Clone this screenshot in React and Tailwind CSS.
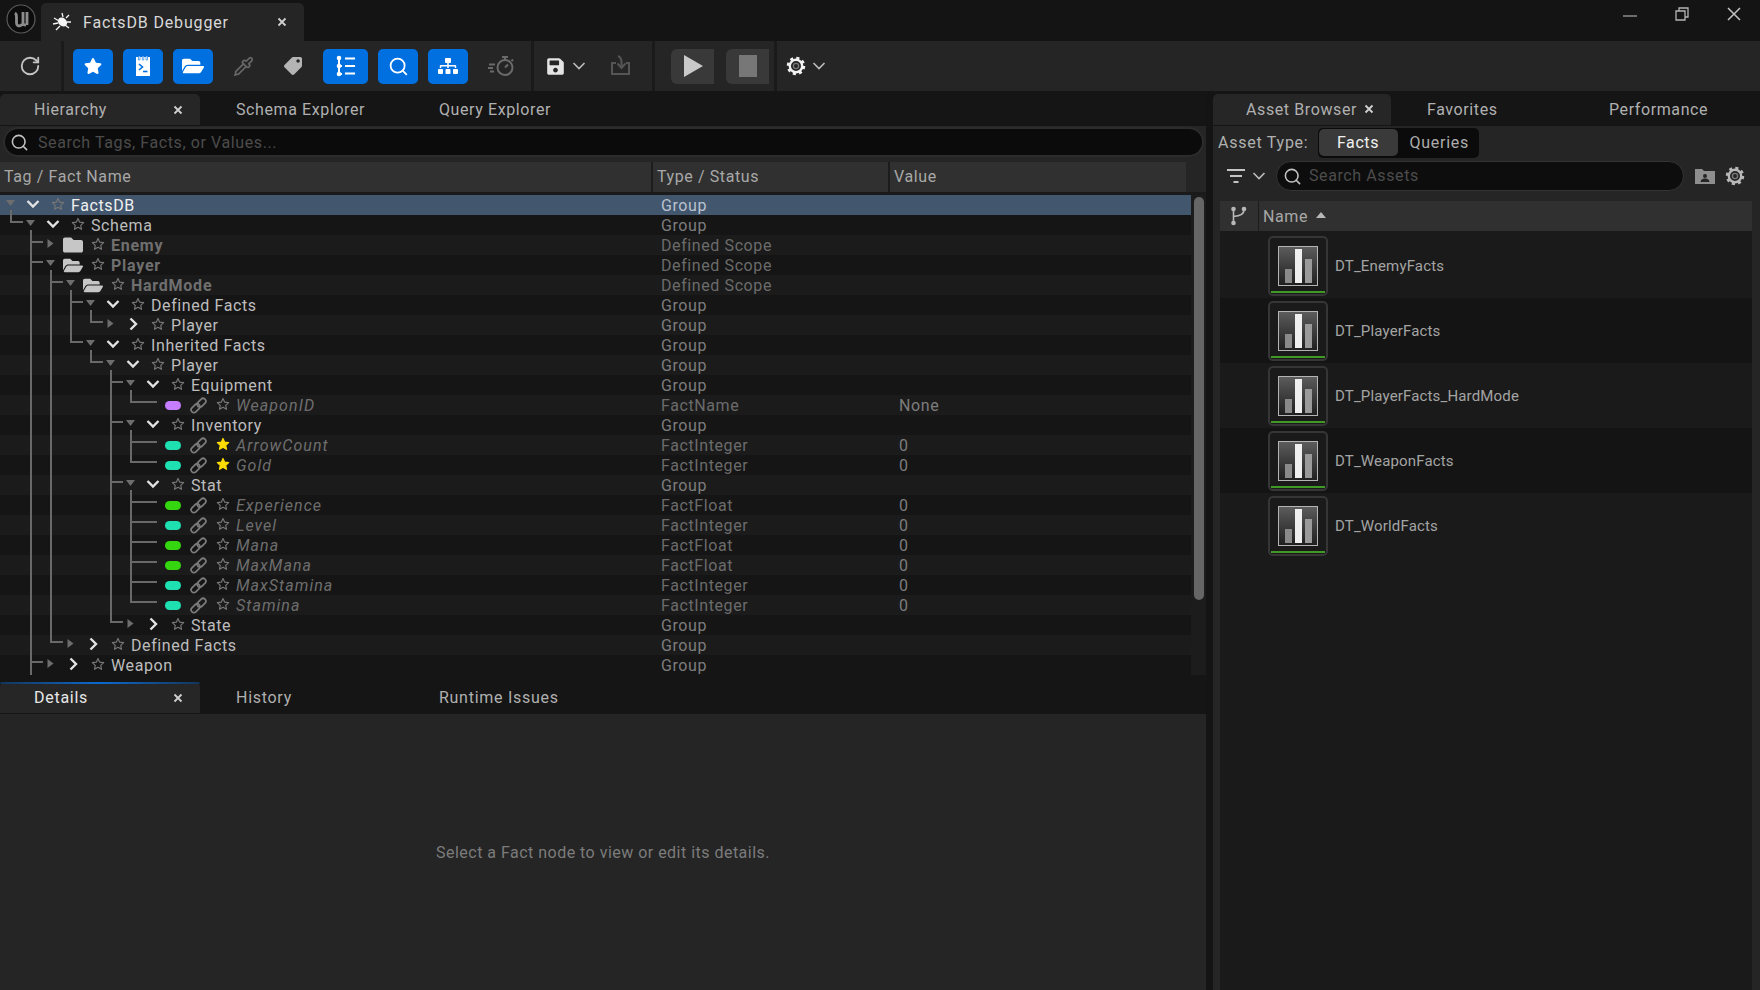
import React from 'react'
import { RotateCw, Search, Pipette } from 'lucide-react'
import { FaStar, FaFolder, FaFolderOpen, FaTag, FaSitemap, FaSave } from 'react-icons/fa'

const rows = [
  { name: 'FactsDB', depth: 0, type: 'Group', open: true },
  { name: 'Schema', depth: 1, type: 'Group', open: true },
  { name: 'Enemy', depth: 2, type: 'Defined Scope', folder: 'closed' },
  { name: 'Player', depth: 2, type: 'Defined Scope', folder: 'open', open: true },
  { name: 'HardMode', depth: 3, type: 'Defined Scope', folder: 'open', open: true },
  { name: 'Defined Facts', depth: 4, type: 'Group', open: true },
  { name: 'Player', depth: 5, type: 'Group' },
  { name: 'Inherited Facts', depth: 4, type: 'Group', open: true },
  { name: 'Player', depth: 5, type: 'Group', open: true },
  { name: 'Equipment', depth: 6, type: 'Group', open: true },
  { name: 'WeaponID', depth: 7, type: 'FactName', value: 'None', pill: 'bg-[#c77dff]' },
  { name: 'Inventory', depth: 6, type: 'Group', open: true },
  { name: 'ArrowCount', depth: 7, type: 'FactInteger', value: '0', pill: 'bg-[#1fe0b0]', fav: true },
  { name: 'Gold', depth: 7, type: 'FactInteger', value: '0', pill: 'bg-[#1fe0b0]', fav: true },
  { name: 'Stat', depth: 6, type: 'Group', open: true },
  { name: 'Experience', depth: 7, type: 'FactFloat', value: '0', pill: 'bg-[#35d60f]' },
  { name: 'Level', depth: 7, type: 'FactInteger', value: '0', pill: 'bg-[#1fe0b0]' },
  { name: 'Mana', depth: 7, type: 'FactFloat', value: '0', pill: 'bg-[#35d60f]' },
  { name: 'MaxMana', depth: 7, type: 'FactFloat', value: '0', pill: 'bg-[#35d60f]' },
  { name: 'MaxStamina', depth: 7, type: 'FactInteger', value: '0', pill: 'bg-[#1fe0b0]' },
  { name: 'Stamina', depth: 7, type: 'FactInteger', value: '0', pill: 'bg-[#1fe0b0]' },
  { name: 'State', depth: 6, type: 'Group' },
  { name: 'Defined Facts', depth: 3, type: 'Group' },
  { name: 'Weapon', depth: 2, type: 'Group' },
]

const assets = ['DT_EnemyFacts', 'DT_PlayerFacts', 'DT_PlayerFacts_HardMode', 'DT_WeaponFacts', 'DT_WorldFacts']

// elbow lines of the tree, worked out from the depths
function treeLines() {
  let d = 'M31 460V480'
  rows.forEach((row, i) => {
    if (row.depth === 0) return
    let parent = i - 1
    while (rows[parent].depth !== row.depth - 1) parent--
    const x = 11 + 20 * (row.depth - 1)
    const y = 20 * i + 7
    d += `M${x} ${20 * parent + 15}V${y}H${x + (row.pill ? 26 : 12)}`
  })
  return d
}

function Close() {
  return (
    <svg width="10" height="10" viewBox="0 0 10 10" className="shrink-0">
      <path d="M1.5 1.5l7 7M8.5 1.5l-7 7" stroke="#d0d0d0" strokeWidth="1.8" />
    </svg>
  )
}

function Chevron({ open, color = '#e2e2e2', small }) {
  return (
    <svg width="14" height="14" viewBox="0 0 14 14" className="shrink-0">
      <path d={open ? 'M1.5 4l5.5 5.5L12.500 4' : 'M4.500 1.500L10 7l-5.500 5.500'} fill="none" stroke={color} strokeWidth={small ? 1.6 : 2.4} />
    </svg>
  )
}

function Star({ fav }) {
  return (
    <svg width="14" height="14" viewBox="0 0 24 24" className="shrink-0 -translate-y-px">
      <path
        d="M12 2.500l2.900 6.300 6.800.8-5 4.700 1.300 6.800-6-3.400-6 3.400 1.300-6.800-5-4.700 6.800-.8z"
        fill={fav ? '#ffdc00' : 'none'}
        stroke={fav ? '#ffdc00' : '#777'}
        strokeWidth="2"
        strokeLinejoin="round"
      />
    </svg>
  )
}

function LinkIcon() {
  return (
    <svg width="19" height="19" viewBox="0 0 19 19" className="shrink-0" fill="none" stroke="#7c7c7c" strokeWidth="1.700">
      <rect x="1.500" y="9.500" width="10" height="5.500" rx="2.700" transform="rotate(-45 6.500 12.250)" />
      <rect x="7.500" y="4" width="10" height="5.500" rx="2.700" transform="rotate(-45 12.500 6.750)" />
    </svg>
  )
}

function TreeRow({ row, index }) {
  const selected = index === 0
  let nameClass = 'text-[#bdbdbd]'
  if (selected) nameClass = 'text-[#f0f0f0]'
  if (row.folder) nameClass = 'text-[#6f6f6f] font-bold tracking-[0.75px]'
  if (row.pill) nameClass = 'text-[#6e6e6e] italic tracking-[1.05px]'
  let typeClass = row.type === 'Group' ? 'text-[#7d7d7d]' : 'text-[#6b6b6b]'
  if (selected) typeClass = 'text-[#b9c3cf]'
  const bg = selected ? 'bg-[#42566e]' : index % 2 ? 'bg-[#151515]' : 'bg-[#1b1b1b]'

  return (
    <div className={`flex h-5 w-[1191px] items-center ${bg}`}>
      <div className="flex w-[661px] items-center" style={{ paddingLeft: row.depth * 20 }}>
        {row.pill ? (
          <div className="flex items-center pl-[25px]">
            <span className={`h-[9px] w-4 rounded-full ${row.pill}`} />
            <span className="ml-2 mr-2 flex"><LinkIcon /></span>
            <Star fav={row.fav} />
          </div>
        ) : (
          <div className="flex items-center">
            <div className="flex w-[23px] justify-start pl-[6px] -translate-y-[2px]">
              {row.open ? (
                <svg width="9" height="6" viewBox="0 0 9 6"><path d="M0 0h9L4.500 6z" fill="#6d6d6d" /></svg>
              ) : (
                <svg width="9" height="9" viewBox="0 0 9 9"><path d="M1.500 0l6 4.500-6 4.500z" fill="#6d6d6d" /></svg>
              )}
            </div>
            <div className="flex w-[20px] justify-center">
              {row.folder === 'open' && <FaFolderOpen size={21} color="#c6c6c6" />}
              {row.folder === 'closed' && <FaFolder size={20} color="#c6c6c6" />}
              {!row.folder && <span className="-translate-y-px"><Chevron open={row.open} /></span>}
            </div>
            <div className="ml-2"><Star /></div>
          </div>
        )}
        <span className={`ml-[6px] translate-y-px whitespace-nowrap ${nameClass}`}>{row.name}</span>
      </div>
      <div className={`w-[238px] translate-y-px ${typeClass}`}>{row.type}</div>
      <div className="translate-y-px text-[#7d7d7d]">{row.value}</div>
    </div>
  )
}

function ToolBtn({ children, className = 'w-10' }) {
  return <div className={`flex h-[35px] items-center justify-center rounded-[5px] bg-[#0070e0] ${className}`}>{children}</div>
}

function Divider() {
  return <div className="h-[50px] w-[3px] bg-[#1a1a1a]" />
}

function Toolbar() {
  return (
    <div className="flex h-[50px] items-center bg-[#252525]">
      <div className="flex w-[61px] justify-center"><RotateCw size={22} color="#c4c4c4" strokeWidth={2} className="-ml-0.5" /></div>
      <Divider />
      <div className="ml-[9px] flex gap-[10px]">
        <ToolBtn><FaStar size={18} color="#fff" /></ToolBtn>
        <ToolBtn>
          <svg width="20" height="24" viewBox="0 0 20 24">
            <path d="M3 3h14v19H3z" fill="#fff" />
            <path d="M5.500 2h1.500v4H5.500zM9.300 2h1.500v4H9.300zM13 2h1.500v4H13z" fill="#fff" stroke="#0070e0" strokeWidth=".6" />
            <path d="M6 10l3.500 3L6 16" fill="none" stroke="#0070e0" strokeWidth="1.600" />
            <path d="M10 17.500h4.500" stroke="#0070e0" strokeWidth="1.600" />
          </svg>
        </ToolBtn>
        <ToolBtn><FaFolderOpen size={22} color="#fff" /></ToolBtn>
      </div>
      <div className="flex w-[60px] justify-center"><Pipette size={21} color="#666" /></div>
      <div className="flex w-[40px] justify-center"><FaTag size={18} color="#b4b4b4" className="-scale-x-100" /></div>
      <div className="ml-[10px] flex gap-[10px]">
        <ToolBtn className="w-[45px]">
          <svg width="24" height="24" viewBox="0 0 24 24" fill="none" stroke="#fff" strokeWidth="2">
            <path d="M5 4v16M5 12h3M5 20h3" />
            <circle cx="5" cy="4" r="1.300" fill="#fff" />
            <circle cx="5" cy="12" r="1.300" fill="#fff" />
            <circle cx="5" cy="20" r="1.300" fill="#fff" />
            <path d="M11 4.500h10M11 12h10M11 19.500h10" />
          </svg>
        </ToolBtn>
        <ToolBtn><Search size={21} color="#fff" strokeWidth={2} /></ToolBtn>
        <ToolBtn><FaSitemap size={20} color="#fff" /></ToolBtn>
      </div>
      <div className="flex w-[63px] justify-center pl-1">
        <svg width="28" height="24" viewBox="0 0 28 24" fill="none" stroke="#6a6a6a" strokeWidth="2">
          <circle cx="17" cy="13.500" r="7.500" />
          <path d="M17 13.500l3-3M14 3h6M17 3v3M23.500 5.500l1.500 1.500M1 10.500h6M0 14h5M2 17.500h4" />
        </svg>
      </div>
      <Divider />
      <div className="flex items-center pl-[12px]">
        <FaSave size={19} color="#e4e4e4" />
        <span className="ml-[7px]"><Chevron open small color="#bcbcbc" /></span>
      </div>
      <div className="ml-5 flex w-[30px] justify-center">
        <svg width="22" height="22" viewBox="0 0 22 22" fill="none" stroke="#555" strokeWidth="2">
          <path d="M6 8H2v11h17V8h-3" />
          <path d="M8 1c3 1 4 4 3.500 10M7.500 8.500l4 4.500 4-4.500" />
        </svg>
      </div>
      <div className="ml-4"><Divider /></div>
      <div className="ml-4 flex gap-3">
        <div className="flex h-[35px] w-[43px] items-center justify-center rounded-l-[6px] bg-[#393939]">
          <svg width="22" height="24" viewBox="0 0 22 24"><path d="M2 1l19 11L2 23z" fill="#c9c9c9" /></svg>
        </div>
        <div className="flex h-[35px] w-[43px] items-center justify-center rounded-l-[6px] bg-[#393939]">
          <span className="h-[22px] w-[18px] bg-[#777]" />
        </div>
      </div>
      <div className="ml-[5px]"><Divider /></div>
      <div className="ml-[9px] flex items-center gap-[6px]">
        <Gear />
        <Chevron open small color="#bcbcbc" />
      </div>
    </div>
  )
}

function Gear({ color = '#f2f2f2' }) {
  return (
    <svg width="20" height="20" viewBox="0 0 20 20" fill="none" className="shrink-0">
      <circle cx="10" cy="10" r="6.200" stroke={color} strokeWidth="2.400" />
      <circle cx="10" cy="10" r="7.500" stroke={color} strokeWidth="3.500" strokeDasharray="2.900 3" />
      <circle cx="10" cy="10" r="2.600" stroke="#777" strokeWidth="1.400" />
    </svg>
  )
}

function DockTabs({ tabs, blue }) {
  return (
    <div className={`flex h-[35px] items-start bg-[#151515] pt-[3px] ${blue ? 'tracking-[0.72px]' : ''}`}>
      <div className={`relative flex h-[31px] w-[200px] items-center justify-between rounded-t-[5px] bg-[#262626] pl-[34px] pr-[17px] ${blue ? 'text-[#e8e8e8]' : 'text-[#b0b0b0]'}`}>
        {blue && <span className="absolute inset-x-0 top-0 h-0.5 rounded-t-[5px] bg-gradient-to-r from-[#12365c] via-[#0a6ad0] to-[#12365c]" />}
        {tabs[0]}
        <Close />
      </div>
      <div className="flex h-[31px] w-[203px] items-center pl-[36px] text-[#b0b0b0]">{tabs[1]}</div>
      <div className="flex h-[31px] items-center pl-[36px] text-[#b0b0b0]">{tabs[2]}</div>
    </div>
  )
}

function LeftPanel() {
  return (
    <div className="flex w-[1206px] flex-col">
      <DockTabs tabs={['Hierarchy', 'Schema Explorer', 'Query Explorer']} />
      <div className="bg-[#252525] pl-[3px] pr-[2px] pt-px">
        <div className="flex h-[30px] items-center rounded-full border-2 border-[#2c2c2c] bg-[#0b0b0b] pl-[5px] text-[#4c4c4c]">
          <Search size={19} color="#c2c2c2" strokeWidth={2} />
          <span className="ml-[9px] translate-y-px">Search Tags, Facts, or Values...</span>
        </div>
      </div>
      <div className="h-[5px] bg-[#252525]" />
      <div className="flex h-[33px] items-start bg-[#1a1a1a]">
        <div className="flex h-[30px] w-[1186px] items-center bg-[#303030] text-[#a8a8a8]">
          <div className="flex h-full w-[653px] items-center border-r-2 border-[#1c1c1c] pl-1">Tag / Fact Name</div>
          <div className="flex h-full w-[237px] items-center border-r-2 border-[#1c1c1c] pl-1">Type / Status</div>
          <div className="pl-1">Value</div>
        </div>
        <div className="h-[30px] flex-1 bg-[#252525]" />
      </div>
      <div className="relative flex h-[480px] bg-[#1c1c1c]">
        <div className="w-[1191px]">
          {rows.map((row, i) => (
            <TreeRow key={i} row={row} index={i} />
          ))}
        </div>
        <div className="ml-[3px] mt-[2px] h-[403px] w-[10px] rounded-full bg-[#666]" />
        <svg className="pointer-events-none absolute left-0 top-0" width="200" height="480" fill="none">
          <path d={treeLines()} stroke="#696969" strokeWidth="2" />
        </svg>
      </div>
      <div className="h-1 bg-[#151515]" />
      <DockTabs blue tabs={['Details', 'History', 'Runtime Issues']} />
      <div className="flex flex-1 items-center justify-center bg-[#252525] tracking-[0.48px] text-[#7c7c7c]">
        <span className="translate-y-px">Select a Fact node to view or edit its details.</span>
      </div>
    </div>
  )
}

function AssetThumb() {
  return (
    <div className="flex h-[60px] w-[60px] flex-col items-center rounded-[5px] border-2 border-[#363636] bg-[#1a1a1a] pt-2">
      <div className="flex h-10 w-10 items-end justify-center gap-[3px] border border-[#b4b4b4] bg-gradient-to-b from-[#5c5c5c] to-[#202020] pb-0.5">
        <span className="h-[14px] w-[7px] bg-[#8a8a8a]" />
        <span className="h-[34px] w-[7px] bg-[#efefef]" />
        <span className="h-6 w-[7px] bg-[#9a9a9a]" />
      </div>
      <div className="mt-[5px] h-0.5 w-[54px] bg-[#3f9a25]" />
    </div>
  )
}

function RightPanel() {
  return (
    <div className="flex flex-1 flex-col bg-[#252525]">
      <div className="flex h-[35px] items-start bg-[#151515] pt-[3px] text-[#b0b0b0]">
        <div className="flex h-[31px] w-[178px] items-center rounded-t-[5px] bg-[#262626] pl-[33px]">
          Asset Browser
          <span className="ml-[7px] -translate-y-px"><Close /></span>
        </div>
        <div className="flex h-[31px] w-[182px] items-center pl-[36px]">Favorites</div>
        <div className="flex h-[31px] items-center pl-[36px]">Performance</div>
      </div>
      <div className="flex h-[32px] items-center pl-[5px] pt-[1px]">
        <span className="text-[#b0b0b0] tracking-[0.75px]">Asset Type:</span>
        <div className="ml-[10px] flex h-[30px] w-[161px] items-center rounded-[5px] bg-[#0b0b0b] pl-px">
          <div className="flex h-[27px] w-[79px] items-center justify-center rounded-[5px] bg-[#3a3a3a] pr-0.5 text-[#f0f0f0]">Facts</div>
          <div className="ml-[11px] text-[#adadad] tracking-[0.75px]">Queries</div>
        </div>
      </div>
      <div className="flex h-[34px] items-center pt-[2px]">
        <div className="ml-[14px] flex items-center gap-[7px]">
          <svg width="18" height="16" viewBox="0 0 18 16" fill="none" stroke="#c4c4c4" strokeWidth="2">
            <path d="M0 2h18M3 8h12M6.500 14h5" />
          </svg>
          <Chevron open small color="#bcbcbc" />
        </div>
        <div className="ml-[10px] flex h-[30px] w-[408px] items-center rounded-full border border-[#333] bg-[#0d0d0d] pl-[6px] text-[#4c4c4c]">
          <Search size={19} color="#c2c2c2" strokeWidth={2} />
          <span className="ml-[7px]">Search Assets</span>
        </div>
        <div className="ml-[11px]">
          <svg width="20" height="16" viewBox="0 0 20 16">
            <path d="M0 1h7l2 2h11v13H0z" fill="#8e8e8e" />
            <circle cx="10" cy="8" r="2" fill="#252525" />
            <path d="M5.500 14c.5-3 2.500-3.500 4.500-3.500s4 .5 4.500 3.500z" fill="#252525" />
          </svg>
        </div>
        <div className="ml-[10px]"><Gear color="#b8b8b8" /></div>
      </div>
      <div className="ml-[7px] mr-2 mt-[9px] flex flex-1 flex-col bg-[#1a1a1a]">
        <div className="flex h-[30px] items-center bg-[#303030] text-[#a8a8a8]">
          <div className="flex h-full w-[39px] items-center justify-center border-r border-[#1c1c1c]">
            <svg width="18" height="20" viewBox="0 0 18 20" fill="none" stroke="#b8b8b8" strokeWidth="1.600">
              <path d="M3.500 4v13M14 4c0 4-3 6-10.500 6.500" />
              <circle cx="3.500" cy="3" r="2.300" fill="#b8b8b8" stroke="none" />
              <circle cx="14" cy="3" r="2.300" fill="#b8b8b8" stroke="none" />
              <circle cx="3.500" cy="17" r="2.300" fill="#b8b8b8" stroke="none" />
            </svg>
          </div>
          <span className="ml-1 translate-y-px">Name</span>
          <svg width="10" height="6" viewBox="0 0 10 6" className="ml-2 -translate-y-px"><path d="M5 0l5 6H0z" fill="#b8b8b8" /></svg>
        </div>
        <div className="h-0.5" />
        {assets.map((name, i) => (
          <div key={name} className={`flex h-[65px] items-center pl-[48px] ${i % 2 ? 'bg-[#141414]' : 'bg-[#1a1a1a]'}`}>
            <AssetThumb />
            <span className="ml-[7px] translate-y-px text-[15px] tracking-[0.16px] text-[#a4a4a4]">{name}</span>
          </div>
        ))}
      </div>
    </div>
  )
}

export default function App() {
  return (
    <div className="flex h-[990px] w-[1760px] flex-col overflow-hidden bg-[#141414] text-base tracking-[0.6px] [font-family:Roboto,sans-serif]">
      <div className="flex h-[41px] items-end">
        <div className="flex h-[38px] w-[41px] items-center justify-center pb-[6px]">
          <svg width="30" height="30" viewBox="0 0 30 30" fill="none">
            <circle cx="15" cy="15" r="14" fill="#0c0c0c" stroke="#5c5c5c" strokeWidth="1.200" />
            <path d="M9 9c1.500 1 1.500 2 1.500 4v6c0 2.500 2 3.500 4 2.500 1-.5 2.500-1.500 2.500-1.500l3 1.500M17 8v12M21 8v13" stroke="#8c8c8c" strokeWidth="2.800" />
          </svg>
        </div>
        <div className="flex h-[38px] w-[263px] items-center rounded-t-[5px] bg-[#252525] pl-[11px] pr-[17px] text-[#d8d8d8]">
          <svg width="20" height="20" viewBox="0 0 20 20" fill="none" stroke="#f4f4f4" strokeWidth="1.300">
            <path d="M2 6l5 3M1 12l5-1M4 18l4-4M10 1l1 4M17 3l-3 3M19 10l-4 0M17 16l-4-3" />
            <ellipse cx="10.500" cy="10" rx="5" ry="4" fill="#f4f4f4" stroke="none" transform="rotate(40 10.500 10)" />
          </svg>
          <span className="ml-[11px] flex-1 translate-y-px tracking-[0.85px]">FactsDB Debugger</span>
          <Close />
        </div>
        <div className="flex flex-1 items-center justify-end self-start pt-[7px] text-[#bdbdbd]">
          <svg width="14" height="4" viewBox="0 0 14 4" className="mr-[38px] translate-y-0.5"><path d="M0 2h14" stroke="#a8a8a8" strokeWidth="1.200" /></svg>
          <svg width="14" height="14" viewBox="0 0 14 14" fill="none" stroke="#b4b4b4" strokeWidth="1.300" className="mr-[38px]">
            <path d="M1 4h9v9H1zM4 4V1h9v9h-3" />
          </svg>
          <svg width="14" height="14" viewBox="0 0 14 14" fill="none" stroke="#c4c4c4" strokeWidth="1.500" className="mr-[19px]">
            <path d="M1 1l12 12M13 1L1 13" />
          </svg>
        </div>
      </div>
      <Toolbar />
      <div className="flex flex-1">
        <LeftPanel />
        <div className="w-[7px] bg-[#141414]" />
        <RightPanel />
      </div>
    </div>
  )
}
